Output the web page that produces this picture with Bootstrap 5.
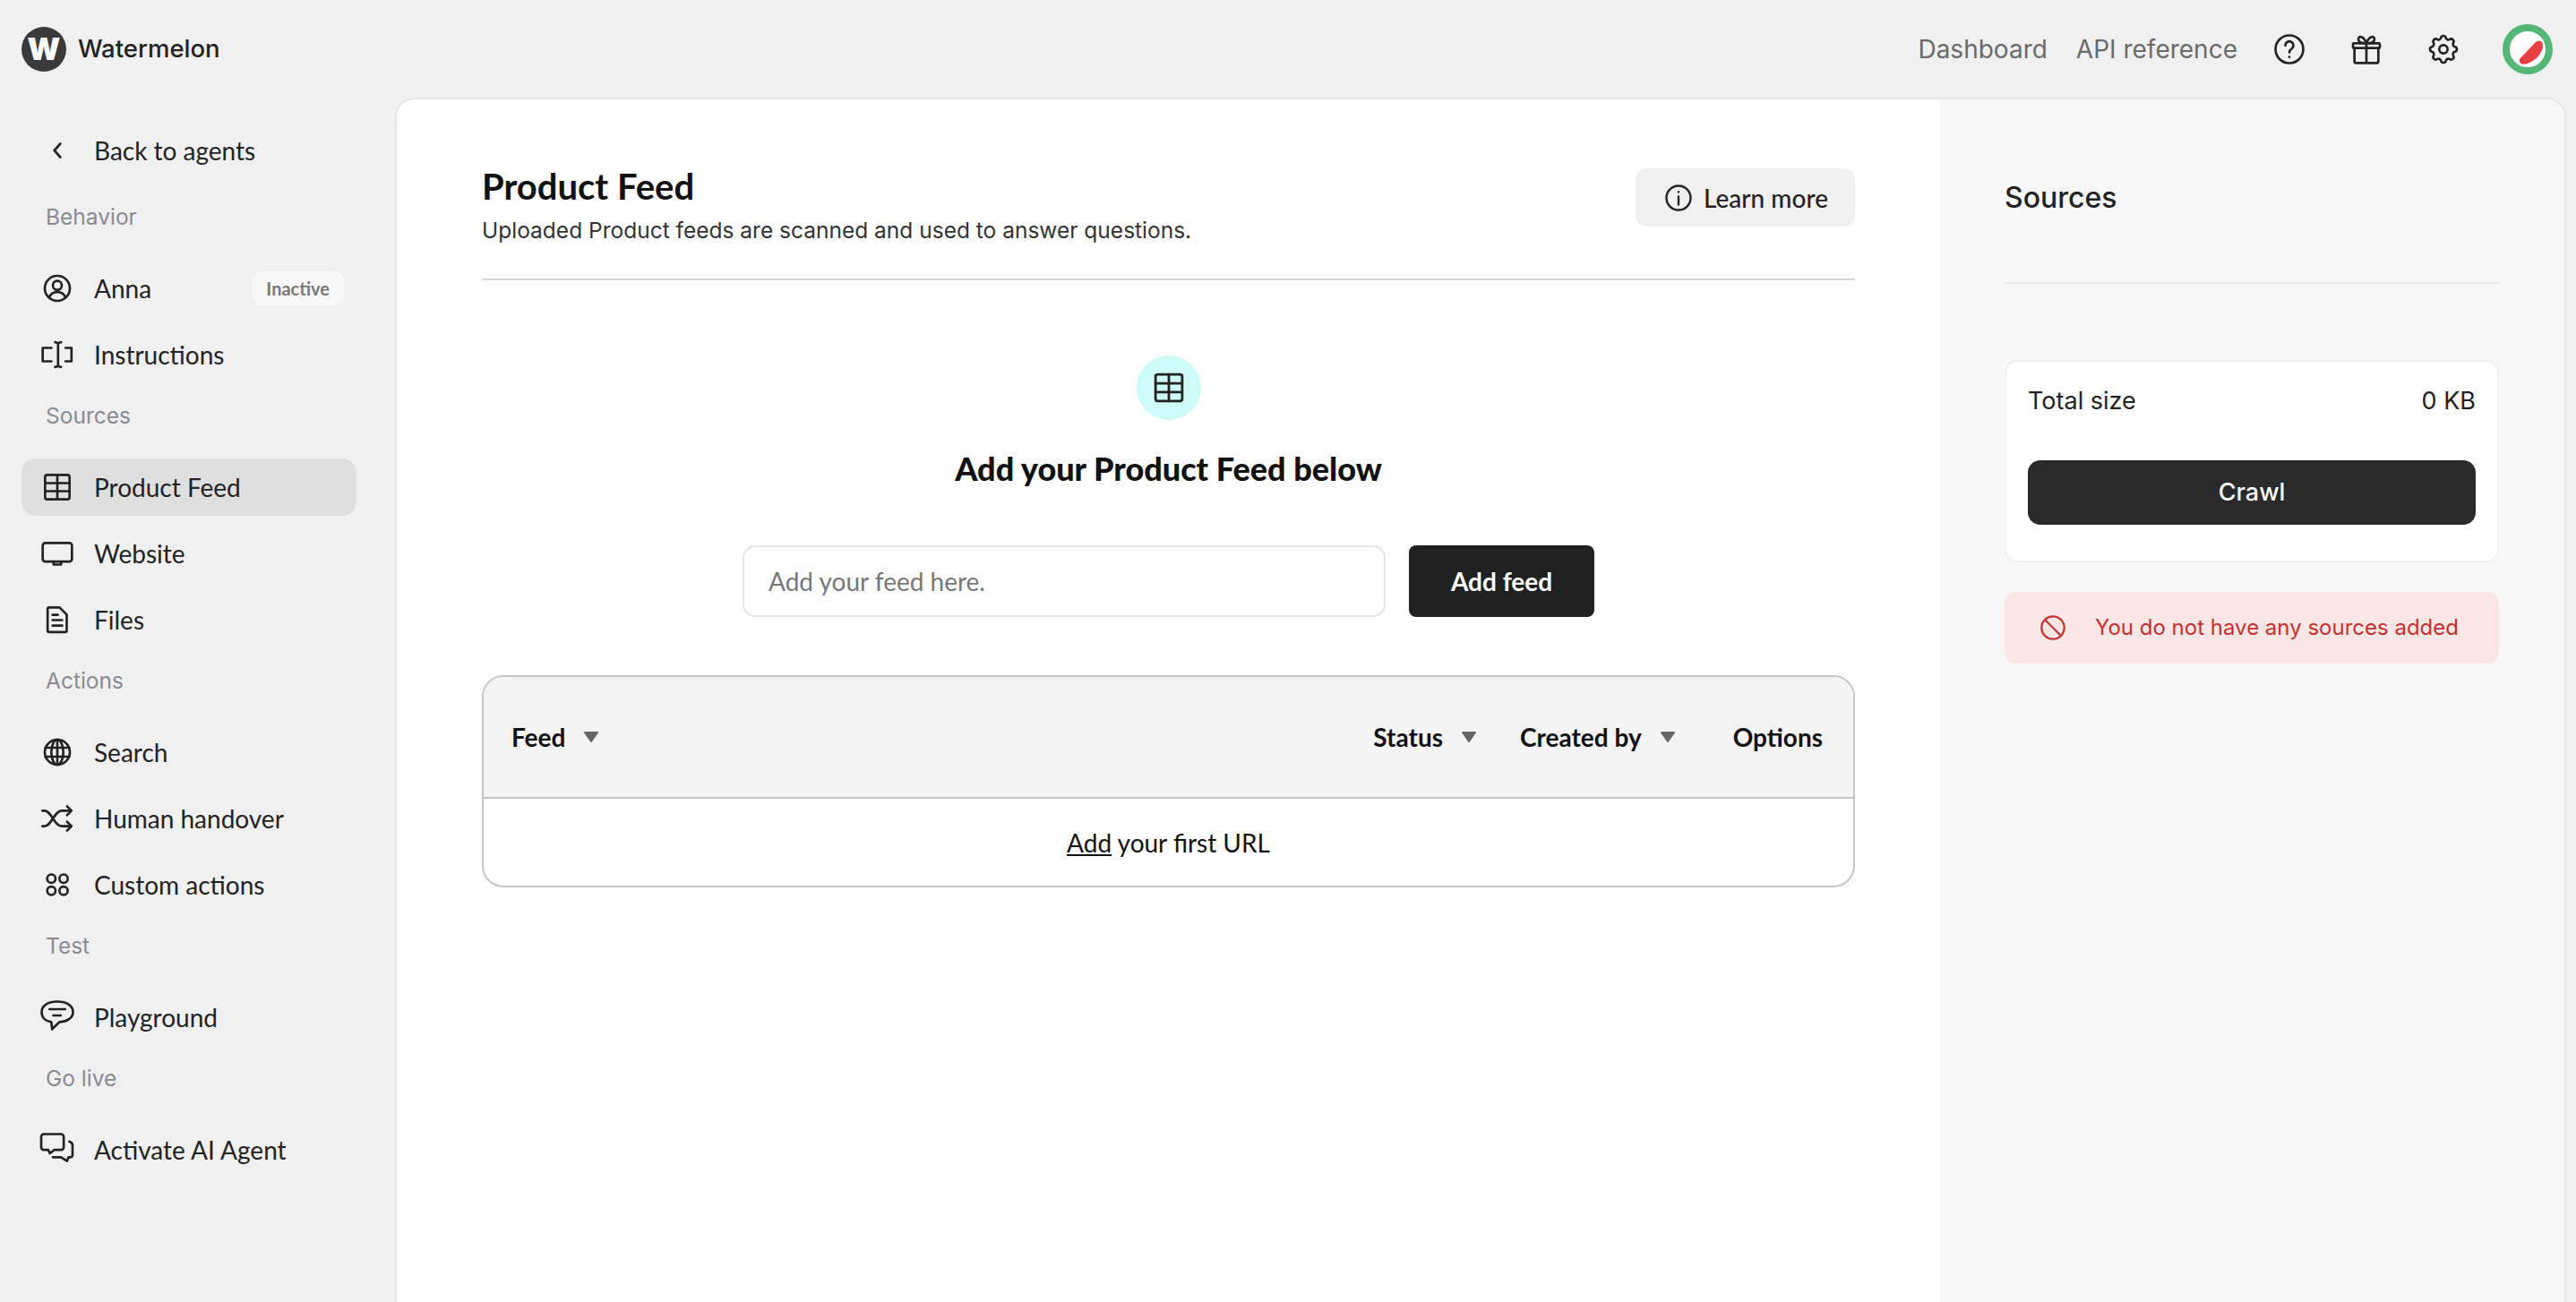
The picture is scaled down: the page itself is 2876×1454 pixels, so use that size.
<!DOCTYPE html>
<html lang="en">
<head>
  <meta charset="UTF-8" />
  <title>Watermelon - Product Feed</title>
  <link rel="stylesheet" href="https://cdn.jsdelivr.net/npm/bootstrap@5.3.3/dist/css/bootstrap.min.css">
  <style>
    html, body {
      height: 100%;
    }

    body {
      background-color: #f0f0f0;
      color: #222;
      font-family: "Lato", sans-serif;
      font-size: 28px;
      overflow: hidden;
    }

    svg {
      flex-shrink: 0;
    }

    .ico {
      fill: none;
      stroke: #222;
      stroke-width: 1.6;
      stroke-linecap: round;
      stroke-linejoin: round;
    }

    .topbar {
      height: 109px;
      padding: 0 26px 0 24px;
    }

    .brand {
      font-family: "Inter", sans-serif;
      font-size: 27.5px;
      font-weight: 500;
      gap: 13px;
    }

    .brand__logo {
      width: 50px;
      height: 50px;
      background: #3a3a3a;
      color: #fff;
      font-size: 34px;
      font-weight: 900;
      font-family: "Inter", sans-serif;
      line-height: 1;
    }

    .top-link {
      font-family: "Inter", sans-serif;
      font-size: 28px;
      color: #6a6a6a;
      text-decoration: none;
      white-space: nowrap;
    }

    .top-links {
      gap: 32px;
    }

    .top-icons {
      gap: 46px;
      margin-left: 38px;
    }

    .shell {
      height: calc(100% - 109px);
    }

    .sidebar {
      width: 441px;
      padding: 27px 43px 0 24px;
      gap: 10px;
    }

    .side-row {
      height: 64px;
      padding-left: 20px;
      gap: 21px;
      border-radius: 16px;
      color: #222;
      text-decoration: none;
    }

    .side-row.is-active {
      background: #dfdfdf;
    }

    .side-row--back {
      margin-bottom: 6px;
    }

    .side-label {
      height: 64px;
      padding: 8px 0 0 27px;
      font-family: "Inter", sans-serif;
      font-size: 24.5px;
      color: #8a8a94;
    }

    .badge-state {
      margin-right: 14px;
      padding: 0 16px;
      height: 38px;
      line-height: 38px;
      background: #f8f8f8;
      border-radius: 12px;
      color: #777;
      font-size: 20px;
      font-weight: 700;
    }

    .panel {
      background: #fff;
      border: 2px solid #e6e6e6;
      border-bottom: 0;
      border-radius: 22px 22px 0 0;
      margin-right: 11px;
      overflow: hidden;
    }

    .feed {
      padding: 0 95px;
    }

    .feed__head {
      margin-top: 77px;
      height: 125px;
      border-bottom: 2px solid #d6d6d6;
    }

    .feed__title {
      font-size: 40px;
      font-weight: 700;
      color: #111;
      line-height: 40px;
      margin: 0;
    }

    .feed__desc {
      font-family: "Inter", sans-serif;
      font-size: 24.5px;
      color: #333;
      margin: 14px 0 0;
      line-height: 30px;
    }

    .btn-learn {
      height: 65px;
      width: 245px;
      background: #f0f0f0;
      border: 0;
      border-radius: 12px;
      font-size: 28px;
      font-weight: 500;
      color: #222;
      gap: 10px;
    }

    .empty__icon {
      width: 72px;
      height: 72px;
      margin-top: 84px;
      background: #cdfbf8;
    }

    .empty__title {
      font-size: 36px;
      font-weight: 900;
      color: #111;
      margin: 32px 0 0;
      line-height: 44px;
    }

    .feed-form {
      margin-top: 64px;
      gap: 26px;
    }

    .feed-form .form-control {
      width: 718px;
      height: 80px;
      border: 2px solid #e6e6e6;
      border-radius: 14px;
      padding: 0 27px;
      font-size: 28px;
      box-shadow: none;
    }

    .feed-form .form-control::placeholder {
      color: #777;
    }

    .btn-add {
      width: 207px;
      height: 80px;
      background: #212121;
      border: 0;
      border-radius: 8px;
      color: #fff;
      font-size: 28px;
      font-weight: 700;
    }

    .feed-table {
      margin-top: 65px;
      border: 2px solid #c6c6c6;
      border-radius: 24px;
      overflow: hidden;
    }

    .feed-table__head {
      height: 136px;
      background: #f4f4f4;
      border-bottom: 2px solid #c6c6c6;
      padding: 0 34px 0 31px;
      font-weight: 700;
      color: #111;
    }

    .feed-table__col {
      gap: 20px;
    }

    .feed-table__body {
      height: 97px;
      color: #111;
    }

    .feed-table__body a {
      color: #111;
    }

    .tri {
      width: 18px;
      height: 14px;
      fill: #666;
      stroke: #666;
      stroke-width: 2;
      stroke-linejoin: round;
    }

    .sources {
      width: 697px;
      background: #f8f8f8;
      padding: 0 73px 0 72px;
    }

    .sources__head {
      height: 206px;
      border-bottom: 2px solid #e8e8e8;
      padding-top: 90px;
      font-family: "Inter", sans-serif;
      font-size: 32px;
      font-weight: 500;
      line-height: 40px;
    }

    .size-card {
      margin-top: 85px;
      height: 226px;
      background: #fff;
      border: 2px solid #f0f0f0;
      border-radius: 14px;
      padding: 24px 24px 0;
      font-family: "Inter", sans-serif;
      font-size: 27px;
      line-height: 40px;
    }

    .btn-crawl {
      height: 72px;
      margin-top: 46px;
      background: #2a2a2a;
      border: 0;
      border-radius: 14px;
      color: #fff;
      font-size: 27px;
      font-weight: 500;
    }

    .src-alert {
      margin: 33px 0 0;
      height: 80px;
      padding: 0 0 0 38px;
      gap: 31px;
      background: #fbe6e6;
      border: 0;
      border-radius: 12px;
      color: #c53030;
      font-family: "Inter", sans-serif;
      font-size: 24px;
    }
  </style>
</head>
<body>

  <header class="topbar d-flex align-items-center justify-content-between">
    <div class="brand d-flex align-items-center">
      <span class="brand__logo rounded-circle d-flex align-items-center justify-content-center">W</span>
      Watermelon
    </div>
    <div class="d-flex align-items-center">
      <nav class="top-links d-flex">
        <a class="top-link" href="#">Dashboard</a>
        <a class="top-link" href="#">API reference</a>
      </nav>
      <div class="top-icons d-flex align-items-center">
        <svg class="ico" width="40" height="40" viewBox="0 0 24 24"><circle cx="12" cy="12" r="9.3"/><path d="M9.3 9.5a2.7 2.7 0 1 1 4.2 2.2c-1 .7-1.5 1.2-1.5 2.4"/><path d="M12 17.2v.1"/></svg>
        <svg class="ico" width="40" height="40" viewBox="0 0 24 24"><rect x="3" y="8" width="18" height="3.2" rx=".6"/><path d="M4 11.2v9a1 1 0 0 0 1 1h14a1 1 0 0 0 1-1v-9M12 8v13.2"/><path d="M12 8C10 8 6.800 8 6.600 5.500 6.400 3 10 2.500 12 8c2-5.500 5.600-5 5.400-2.500C17.200 8 14 8 12 8z"/></svg>
        <svg class="ico" width="40" height="40" viewBox="0 0 24 24"><path d="M10.325 4.317c.426-1.756 2.924-1.756 3.35 0a1.724 1.724 0 0 0 2.573 1.066c1.543-.94 3.31.826 2.37 2.37a1.724 1.724 0 0 0 1.065 2.572c1.756.426 1.756 2.924 0 3.35a1.724 1.724 0 0 0-1.066 2.573c.94 1.543-.826 3.31-2.37 2.37a1.724 1.724 0 0 0-2.572 1.065c-.426 1.756-2.924 1.756-3.35 0a1.724 1.724 0 0 0-2.573-1.066c-1.543.94-3.31-.826-2.37-2.37a1.724 1.724 0 0 0-1.065-2.572c-1.756-.426-1.756-2.924 0-3.35a1.724 1.724 0 0 0 1.066-2.573c-.94-1.543.826-3.31 2.37-2.37c1 .608 2.296.07 2.572-1.065z"/><circle cx="12" cy="12" r="2.800"/></svg>
        <svg width="56" height="56" viewBox="0 0 56 56"><circle cx="28" cy="28" r="24" fill="#fff" stroke="#55b776" stroke-width="8"/><path d="M19 39 37 20q4-3 7 0 2 4 0 9-4 10-16 15-10 3-9-5z" fill="#e84040"/></svg>
      </div>
    </div>
  </header>

  <div class="shell d-flex">
    <aside class="sidebar d-flex flex-column">
      <a class="side-row side-row--back d-flex align-items-center" href="#">
        <svg class="ico" width="40" height="40" viewBox="0 0 24 24"><path d="M14 7.500 10 12l4 4.500"/></svg>
        Back to agents
      </a>
      <div class="side-label">Behavior</div>
      <a class="side-row d-flex align-items-center" href="#">
        <svg class="ico" width="40" height="40" viewBox="0 0 24 24"><circle cx="12" cy="12" r="8.400"/><circle cx="12" cy="10" r="3"/><path d="M6.500 18.200c1-2.500 3-3.700 5.500-3.700s4.500 1.200 5.500 3.700"/></svg>
        Anna
        <span class="badge-state ms-auto">Inactive</span>
      </a>
      <a class="side-row d-flex align-items-center" href="#">
        <svg class="ico" width="40" height="40" viewBox="0 0 24 24"><path d="M8 7.500H2.200v9H8M17.500 7.500h4v9h-4M12.500 4.500v15M10.500 3.700c1 0 2 .8 2 .8s1-.8 2-.8M10.500 20.300c1 0 2-.8 2-.8s1 .8 2 .8"/></svg>
        Instructions
      </a>
      <div class="side-label">Sources</div>
      <a class="side-row is-active d-flex align-items-center" href="#">
        <svg class="ico" width="40" height="40" viewBox="0 0 24 24"><rect x="3.800" y="3.800" width="16.400" height="16.400" rx="1.500"/><path d="M12 3.800v16.400M3.800 9.300h16.400M3.800 14.700h16.400"/></svg>
        Product Feed
      </a>
      <a class="side-row d-flex align-items-center" href="#">
        <svg class="ico" width="40" height="40" viewBox="0 0 24 24"><rect x="2.200" y="5" width="19.600" height="12.500" rx="1.800"/><path d="M9.500 17.500v2h5v-2"/></svg>
        Website
      </a>
      <a class="side-row d-flex align-items-center" href="#">
        <svg class="ico" width="40" height="40" viewBox="0 0 24 24"><path d="M6.500 3.800h7l4.800 4.800v10.700a1 1 0 0 1-1 1H6.500a1 1 0 0 1-1-1V4.800a1 1 0 0 1 1-1z"/><path d="M8.800 8.800h3.500M8.800 12.300h6.500M8.800 16h6.500"/></svg>
        Files
      </a>
      <div class="side-label">Actions</div>
      <a class="side-row d-flex align-items-center" href="#">
        <svg class="ico" width="40" height="40" viewBox="0 0 24 24"><circle cx="12" cy="12" r="8.400"/><ellipse cx="12" cy="12" rx="4" ry="8.400"/><path d="M4 9h16M4 15h16M12 3.600v16.800"/></svg>
        Search
      </a>
      <a class="side-row d-flex align-items-center" href="#">
        <svg class="ico" width="40" height="40" viewBox="0 0 24 24"><path d="M2 6.800h1.500c4.500 0 6.500 10.400 11.500 10.400h6M2 17.200h1.500c4.500 0 6.500-10.400 11.500-10.400h6"/><path d="M18.500 3.800l3 3-3 3M18.500 14.200l3 3-3 3"/></svg>
        Human handover
      </a>
      <a class="side-row d-flex align-items-center" href="#">
        <svg class="ico" width="40" height="40" viewBox="0 0 24 24"><circle cx="8" cy="7.900" r="2.800"/><circle cx="16.200" cy="7.900" r="2.800"/><circle cx="8" cy="16.100" r="2.800"/><circle cx="16.200" cy="16.100" r="2.800"/></svg>
        Custom actions
      </a>
      <div class="side-label">Test</div>
      <a class="side-row d-flex align-items-center" href="#">
        <svg class="ico" width="40" height="40" viewBox="0 0 24 24"><path d="M12 1.500C6 1.500 1.500 4 1.500 8.500c0 3.800 2.800 6.200 6.500 6.700l.5 4.800 5-4.800c5-.2 9-2.600 9-6.700C22.500 4 18 1.500 12 1.500z"/><path d="M6.800 6.600h10.400M9.300 10.800h5"/></svg>
        Playground
      </a>
      <div class="side-label">Go live</div>
      <a class="side-row d-flex align-items-center" href="#">
        <svg class="ico" width="40" height="40" viewBox="0 0 24 24"><path d="M3 1.500h11.500a1.800 1.800 0 0 1 1.800 1.800v7a1.800 1.800 0 0 1-1.800 1.800H10l-3 2.300-1-2.300H3a1.800 1.800 0 0 1-1.800-1.800v-7A1.800 1.800 0 0 1 3 1.500z"/><path d="M20 6.500c1.500.5 2.200 1.500 2.200 2.500v6.500a1.500 1.500 0 0 1-1.500 1.500h-1.200l-1 2.500-4-2.500H9"/></svg>
        Activate AI Agent
      </a>
    </aside>

    <div class="panel flex-grow-1 d-flex">
      <main class="feed flex-grow-1">
        <div class="feed__head d-flex justify-content-between align-items-start">
          <div>
            <h1 class="feed__title">Product Feed</h1>
            <p class="feed__desc">Uploaded Product feeds are scanned and used to answer questions.</p>
          </div>
          <button class="btn btn-learn d-flex align-items-center justify-content-center" type="button">
            <svg class="ico" width="36" height="36" viewBox="0 0 24 24"><circle cx="12" cy="12" r="9"/><path d="M12 11v6M12 7.500v.1"/></svg>
            Learn more
          </button>
        </div>

        <div class="d-flex flex-column align-items-center">
          <div class="empty__icon rounded-circle d-flex align-items-center justify-content-center">
            <svg class="ico" width="42" height="42" viewBox="0 0 24 24"><rect x="3.500" y="3.500" width="17" height="17" rx="1.500"/><path d="M12 3.500v17M3.500 9.200h17M3.500 14.800h17"/></svg>
          </div>
          <h2 class="empty__title">Add your Product Feed below</h2>
          <form class="feed-form d-flex">
            <input class="form-control" type="text" placeholder="Add your feed here.">
            <button class="btn btn-add" type="button">Add feed</button>
          </form>
        </div>

        <div class="feed-table">
          <div class="feed-table__head d-flex align-items-center">
            <div class="feed-table__col d-flex align-items-center">Feed <svg class="tri" viewBox="0 0 18 14"><path d="M2 2h14L9 12z"/></svg></div>
            <div class="feed-table__col d-flex align-items-center ms-auto">Status <svg class="tri" viewBox="0 0 18 14"><path d="M2 2h14L9 12z"/></svg></div>
            <div class="feed-table__col d-flex align-items-center ms-5">Created by <svg class="tri" viewBox="0 0 18 14"><path d="M2 2h14L9 12z"/></svg></div>
            <div class="ms-5 ps-3">Options</div>
          </div>
          <div class="feed-table__body d-flex align-items-center justify-content-center">
            <span><a href="#">Add</a> your first URL</span>
          </div>
        </div>
      </main>

      <aside class="sources flex-shrink-0">
        <div class="sources__head">Sources</div>
        <div class="size-card">
          <div class="d-flex justify-content-between"><span>Total size</span><span>0 KB</span></div>
          <button class="btn btn-crawl w-100" type="button">Crawl</button>
        </div>
        <div class="alert src-alert d-flex align-items-center" role="alert">
          <svg width="32" height="32" viewBox="0 0 24 24" fill="none" stroke="#c53030" stroke-width="1.700"><circle cx="12" cy="12" r="9.500"/><path d="M5.300 5.300l13.400 13.400"/></svg>
          You do not have any sources added
        </div>
      </aside>
    </div>
  </div>

  <script src="https://cdn.jsdelivr.net/npm/bootstrap@5.3.3/dist/js/bootstrap.bundle.min.js"></script>
</body>
</html>
